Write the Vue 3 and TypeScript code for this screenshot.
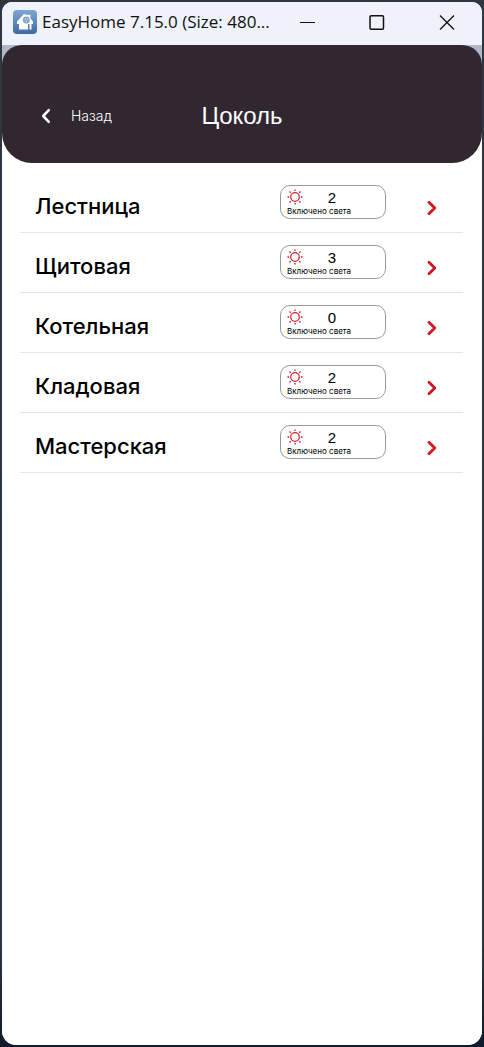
<script setup lang="ts">
interface Room {
  name: string
  lights: number
}

const title = 'Цоколь'
const rooms: Room[] = [
  { name: 'Лестница', lights: 2 },
  { name: 'Щитовая', lights: 3 },
  { name: 'Котельная', lights: 0 },
  { name: 'Кладовая', lights: 2 },
  { name: 'Мастерская', lights: 2 },
]
</script>

<template>
  <div class="desktop">
    <div class="window">
      <div class="titlebar">
        <svg class="app-icon" viewBox="0 0 24 24" aria-hidden="true">
          <defs>
            <linearGradient id="appGradient" x1="0" y1="0" x2="0" y2="1">
              <stop offset="0" stop-color="#7fa6d2" />
              <stop offset="1" stop-color="#4169a5" />
            </linearGradient>
          </defs>
          <rect width="24" height="24" rx="4" fill="url(#appGradient)" />
          <path d="M4 11.5 11 4l2 .8h4.5v3.7l2.5 3V14h-1.5v5.5h-2V14h-1.5v5.5H6V14H4z" fill="#fff" />
          <circle cx="13.3" cy="10" r="3.4" fill="#7f9fc8" />
          <path d="M11.7 9h1.2M13.9 9h1.2M12.6 11.3h1.4" stroke="#fff" stroke-width="1" />
        </svg>
        <span class="app-title">EasyHome 7.15.0 (Size: 480...</span>
        <div class="controls">
          <button type="button" aria-label="Свернуть">
            <svg viewBox="0 0 16 16"><path d="M1 8.5h15" stroke="#111" stroke-width="1" /></svg>
          </button>
          <button type="button" aria-label="Развернуть">
            <svg viewBox="0 0 16 16"><rect x="1" y="1.7" width="13.5" height="13.5" rx="1.2" fill="none" stroke="#111" stroke-width="1.5" /></svg>
          </button>
          <button type="button" aria-label="Закрыть">
            <svg viewBox="0 0 16 16"><path d="M1 1.5 15 15.5M15 1.5 1 15.5" stroke="#111" stroke-width="1.3" /></svg>
          </button>
        </div>
      </div>

      <div class="screen">
        <div class="header-bg">
          <header class="header">
            <button type="button" class="back">
              <svg viewBox="0 0 12 16" aria-hidden="true">
                <path d="M8.8 2.2 3.2 8 8.8 13.8" fill="none" stroke="#fff" stroke-width="2.6" stroke-linecap="round" stroke-linejoin="round" />
              </svg>
              <span>Назад</span>
            </button>
            <h1>{{ title }}</h1>
          </header>
        </div>

        <nav class="rooms">
          <button v-for="room in rooms" :key="room.name" type="button" class="room">
            <span class="name">{{ room.name }}</span>
            <span class="badge">
              <span class="count-line">
                <svg class="sun" viewBox="0 0 16 16" fill="none" stroke="#d0202c" aria-hidden="true">
                  <circle cx="8" cy="8" r="4.3" stroke-width="1.2" />
                  <path d="M8 .5v1.6M8 13.9v1.6M.5 8h1.6M13.9 8h1.6M2.5 2.5l1.2 1.2M12.3 12.3l1.2 1.2M13.5 2.5l-1.2 1.2M3.7 12.3l-1.2 1.2" stroke-width="1.3" />
                </svg>
                <span class="count">{{ room.lights }}</span>
              </span>
              <span class="caption">Включено света</span>
            </span>
            <svg class="chevron" viewBox="0 0 10 16" aria-hidden="true">
              <path d="M2 2.2 7.8 8 2 13.8" fill="none" stroke="#d11422" stroke-width="2.8" stroke-linecap="round" stroke-linejoin="round" />
            </svg>
          </button>
        </nav>
      </div>
    </div>
  </div>
</template>

<style>
body {
  margin: 0;
}
</style>

<style scoped>
.desktop {
  display: flex;
  min-height: 100vh;
  box-sizing: border-box;
  padding: 2px;
  background: linear-gradient(#2f363e, #2c3542 90%, #0f1a2b);
}

.window {
  display: flex;
  flex: 1;
  flex-direction: column;
  min-width: 0;
  overflow: hidden;
  border-radius: 10px 10px 14px 14px;
  background: #fff;
}

button {
  margin: 0;
  padding: 0;
  border: 0;
  background: none;
  color: inherit;
  font: inherit;
  cursor: pointer;
}

svg {
  display: block;
  flex: none;
}

.titlebar {
  display: flex;
  align-items: center;
  height: 43px;
  padding-left: 11px;
  background: #eff2fa;
  color: #111;
}

.app-icon {
  width: 24px;
  height: 24px;
  margin-bottom: 4px;
}

.app-title {
  flex: 1;
  min-width: 0;
  margin: 0 0 3px 5px;
  font: 17px/26px "Open Sans", "Noto Sans", sans-serif;
  white-space: nowrap;
}

.controls {
  display: flex;
  margin-bottom: 3px;
}

.controls button {
  display: flex;
  align-items: center;
  justify-content: center;
  width: 70px;
  height: 40px;
}

.controls svg {
  width: 16px;
  height: 16px;
}

.screen {
  flex: 1;
  border-radius: 0 0 14px 14px;
  background: #fff;
}

.header-bg {
  background: linear-gradient(#b0b8c8 50%, #fff 50%);
}

.header {
  display: grid;
  grid-template-columns: 1fr auto 1fr;
  align-items: center;
  box-sizing: border-box;
  height: 118px;
  padding: 24px 38px 0;
  border-radius: 20px 20px 30px 30px;
  background: #302731;
  color: #fff;
}

.back {
  display: flex;
  align-items: center;
  justify-self: start;
  gap: 19px;
  font: 300 14px/20px Inter, sans-serif;
}

.back svg {
  width: 12px;
  height: 16px;
}

h1 {
  margin: 0;
  font: 24px/28px "Liberation Sans", Arial, sans-serif;
}

.rooms {
  display: flex;
  flex-direction: column;
  padding: 10px 19px 0 18px;
}

.room {
  display: flex;
  align-items: center;
  box-sizing: border-box;
  height: 60px;
  padding: 0 26px 0 15px;
  border-bottom: 1px solid #e6e6e6;
  color: #000;
  text-align: left;
}

.name {
  flex: 1;
  padding-top: 6px;
  font: 500 22px/28px Inter, sans-serif;
}

.badge {
  display: flex;
  flex-direction: column;
  box-sizing: border-box;
  width: 106px;
  height: 34px;
  margin-bottom: 2px;
  padding: 3px 6px;
  border: 1px solid #999;
  border-radius: 10px;
}

.count-line {
  display: flex;
  align-items: center;
  height: 17px;
}

.sun {
  width: 16px;
  height: 16px;
}

.count {
  width: 58px;
  font: 15px/17px "Liberation Sans", Arial, sans-serif;
  text-align: center;
}

.caption {
  font: 8px/10px Inter, sans-serif;
  white-space: nowrap;
}

.chevron {
  width: 10px;
  height: 16px;
  margin: 10px 0 0 41px;
}
</style>
